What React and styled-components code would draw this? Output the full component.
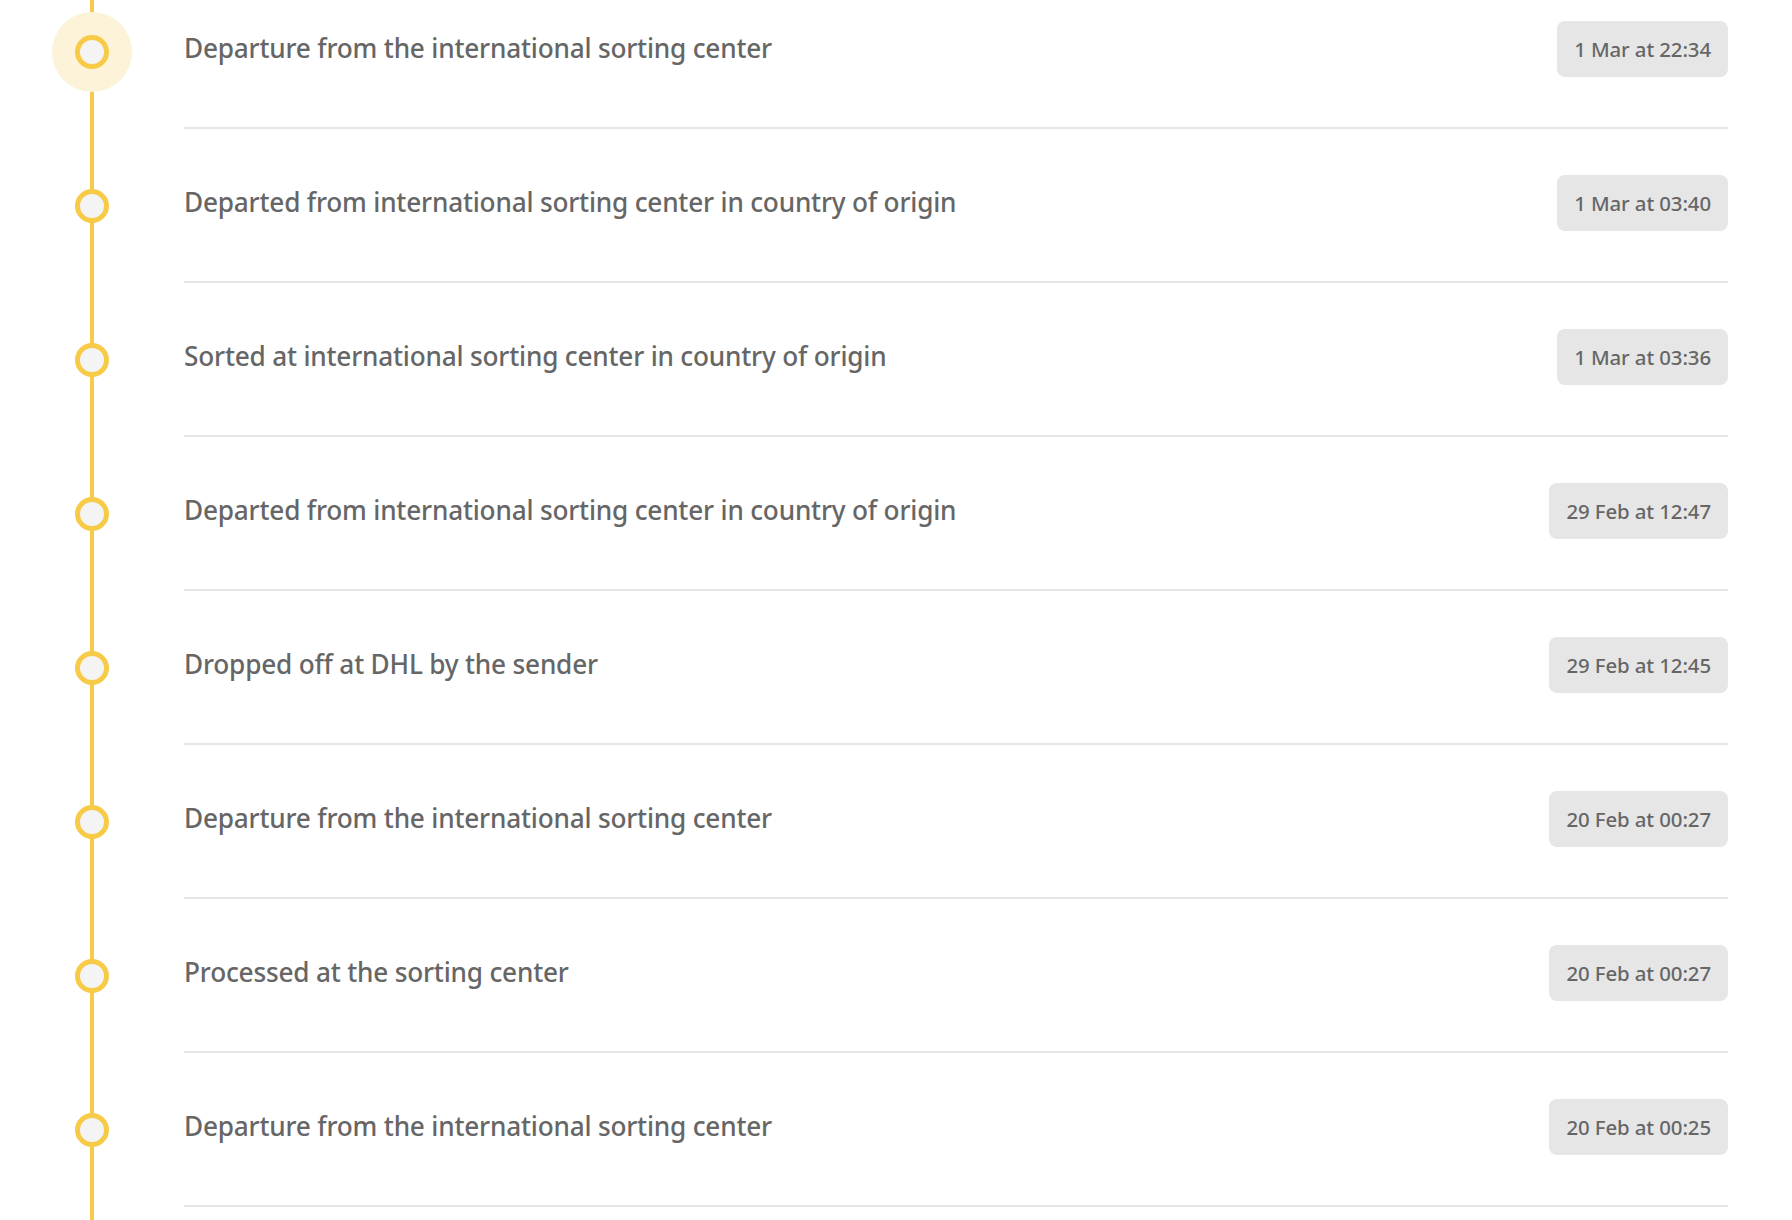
import React from "react";
import styled, { createGlobalStyle } from "styled-components";

const Global = createGlobalStyle`
  html, body { margin: 0; padding: 0; background: #fff; overflow: hidden; }
  body { font-family: "Noto Sans", "Open Sans", sans-serif; }
`;

const Page = styled.div`
  height: 1220px;
  overflow: hidden;
`;

const List = styled.ol`
  list-style: none;
  margin: -25px 0 0 0;
  padding: 0 64px 0 0;
`;

const Row = styled.li`
  display: grid;
  grid-template-columns: 184px 1fr;
  height: 154px;
`;

const Rail = styled.div`
  position: relative;
  display: flex;
  align-items: center;
  justify-content: center;
  width: 184px;
  &::before {
    content: "";
    position: absolute;
    left: 90px;
    top: 0;
    bottom: -2px;
    width: 4px;
    background: #f7cb48;
  }
`;

const Halo = styled.span`
  position: relative;
  z-index: 1;
  display: flex;
  align-items: center;
  justify-content: center;
  width: 80px;
  height: 80px;
  border-radius: 50%;
  background: ${(p) => (p.$active ? "#fcf3d8" : "transparent")};
`;

const Dot = styled.span`
  box-sizing: border-box;
  width: 34px;
  height: 34px;
  border-radius: 50%;
  border: 5px solid #f7cb48;
  background: #f4f4f4;
`;

const Content = styled.div`
  display: flex;
  align-items: center;
  justify-content: space-between;
  border-bottom: 2px solid #e6e6e6;
  box-sizing: border-box;
  padding-bottom: 4px;
`;

const Title = styled.span`
  font-size: 26.2px;
  font-weight: 500;
  color: #666666;
  letter-spacing: -0.2px;
  position: relative;
  top: -1px;
`;

const Stamp = styled.span`
  display: inline-flex;
  align-items: center;
  height: 56px;
  padding: 0 17px;
  box-sizing: border-box;
  border-radius: 8px;
  background: #e6e6e6;
  color: #666666;
  font-size: 20.4px;
  font-weight: 500;
  letter-spacing: -0.1px;
`;

const events = [
  ["Departure from the international sorting center", "1 Mar at 22:34"],
  ["Departed from international sorting center in country of origin", "1 Mar at 03:40"],
  ["Sorted at international sorting center in country of origin", "1 Mar at 03:36"],
  ["Departed from international sorting center in country of origin", "29 Feb at 12:47"],
  ["Dropped off at DHL by the sender", "29 Feb at 12:45"],
  ["Departure from the international sorting center", "20 Feb at 00:27"],
  ["Processed at the sorting center", "20 Feb at 00:27"],
  ["Departure from the international sorting center", "20 Feb at 00:25"],
  ["", ""],
];

export default function App() {
  return (
    <Page>
      <Global />
      <List>
        {events.map(([title, time], i) => (
          <Row key={i}>
            <Rail>
              {title && (
                <Halo $active={i === 0}>
                  <Dot />
                </Halo>
              )}
            </Rail>
            <Content>
              <Title>{title}</Title>
              {time && <Stamp>{time}</Stamp>}
            </Content>
          </Row>
        ))}
      </List>
    </Page>
  );
}
